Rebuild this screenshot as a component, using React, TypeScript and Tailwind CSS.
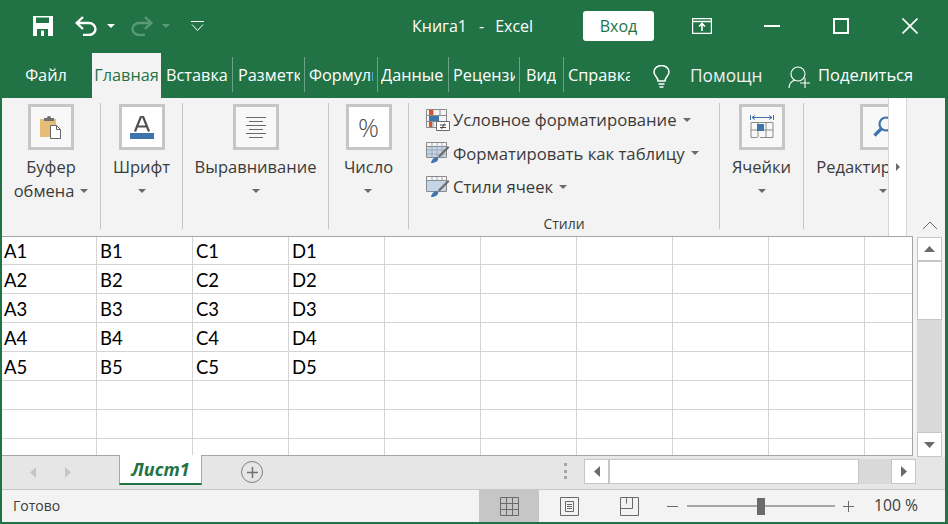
const sans = "font-['Open_Sans','Noto_Sans',sans-serif]";

const tabs = [
  { label: "Вставка", className: "w-[71px] pl-[5px]" },
  { label: "Разметка страницы", className: "w-[72px] pl-[5px] border-l border-[#6aa387]" },
  { label: "Формулы", className: "w-[73px] pl-[4px] border-l border-[#6aa387]" },
  { label: "Данные", className: "w-[71px] pl-[3px] border-l border-[#6aa387]" },
  { label: "Рецензирование", className: "w-[71px] pl-[4px] border-l border-[#6aa387]" },
  { label: "Вид", className: "w-[44px] pl-[6px] border-l border-[#6aa387]" },
  { label: "Справка", className: "w-[71px] pl-[4px] border-l border-[#6aa387]" },
];

function Caret({ className = "" }: { className?: string }) {
  return (
    <svg width="8" height="4" viewBox="0 0 8 4" className={className}>
      <path d="M0 0h8L4 4z" fill="#6a6a6a" />
    </svg>
  );
}

function IconBox({ white, children }: { white?: boolean; children: React.ReactNode }) {
  return (
    <div className={`w-[46px] h-[46px] border-[3px] border-[#c6c6c6] flex items-center justify-center shrink-0 ${white ? "bg-white" : "bg-[#f8f8f8]"}`}>
      {children}
    </div>
  );
}

function Separator() {
  return <div className="w-px h-[126px] mt-[5px] bg-[#c6c6c6] shrink-0" />;
}

function Group({ width, icon, children }: { width: string; icon: React.ReactNode; children: React.ReactNode }) {
  return (
    <div className={`${width} shrink-0 flex flex-col items-center pt-[6px]`}>
      {icon}
      <div className="mt-[5px] flex flex-col items-center text-[16.500px] leading-[24px] text-[#3b3b3b]">{children}</div>
    </div>
  );
}

function Clipboard() {
  return (
    <svg width="22" height="23" viewBox="0 0 22 23">
      <path d="M0 3h16v18H0z" fill="#e6bd78" />
      <path d="M4 2h3a2 2 0 0 1 4 0h3v3H4z" fill="#6f6f6f" />
      <path d="M10.500 9.500h6l4 4v9h-10z" fill="#fff" stroke="#666" />
      <path d="M16.500 9.500v4h4" fill="none" stroke="#666" />
    </svg>
  );
}

function FontIcon() {
  return (
    <svg width="24" height="23" viewBox="0 0 24 23">
      <path d="M5 15.500 11 .5h2l6 15M7.500 10.500h9" fill="none" stroke="#505050" strokeWidth="2.200" />
      <path d="M0 17h24v6H0z" fill="#3f73ad" />
    </svg>
  );
}

function AlignIcon() {
  return (
    <svg width="22" height="22" viewBox="0 0 22 22" stroke="#6a6a6a">
      <path d="M1 1.500h20M4 5.500h14M1 9.500h20M4 13.500h14M1 17.500h20M4 21.500h14" />
    </svg>
  );
}

function CellsIcon() {
  return (
    <svg width="24" height="26" viewBox="0 0 24 26">
      <path d="M.5 1v5M23.500 1v5" stroke="#3f73ad" />
      <path d="M2 3.500h20M5 1.500 2 3.500l3 2M19 1.500l3 2-3 2" fill="none" stroke="#3f73ad" />
      <path d="M1 8.500h22v15H10M1 8.500v15h6M8 8.500v15M16 8.500v15M1 16h22" fill="none" stroke="#8a8a8a" />
      <path d="M7 10h7v7H7z" fill="#3f73ad" />
    </svg>
  );
}

function SearchIcon() {
  return (
    <svg width="22" height="22" viewBox="0 0 22 22">
      <circle cx="14" cy="8" r="6.500" fill="none" stroke="#3f73ad" strokeWidth="2.200" />
      <path d="m9.500 12.500-7 7" stroke="#3f73ad" strokeWidth="3.200" />
    </svg>
  );
}

function BrushGrid({ dense }: { dense?: boolean }) {
  return (
    <svg width="24" height="22" viewBox="0 0 24 22">
      <path d="M.5 .5h20v15H.5z" fill="#f7f7f7" stroke="#8a8a8a" />
      <path d="M1 5h19v10H1z" fill="#c5d5e8" />
      <path d="M.5 4.500h20" stroke="#8a8a8a" />
      {dense && <path d="M1 8h19M1 12h19M6 1v14M11 1v14M16 1v14" stroke="#a0a9b5" />}
      {!dense && <path d="M6 1v3.500M11 1v3.500M16 1v3.500" stroke="#a0a9b5" />}
      <path d="m12 14 10-10 1.500 1.500-10 10z" fill="#6a6a6a" />
      <path d="M5 21c.5-4 4-6.500 7-5.500 1 3-2 5.500-7 5.500z" fill="#3f73ad" />
    </svg>
  );
}

function ConditionalIcon() {
  return (
    <svg width="24" height="22" viewBox="0 0 24 22">
      <path d="M.5 .5h20v18H.5zM.5 6.500h20M.5 12.500h20M7 .5v18M14 .5v6" fill="none" stroke="#8a8a8a" />
      <path d="M3 1h4v5H3z" fill="#d4552c" />
      <path d="M3 7h10v5H3z" fill="#3f73ad" />
      <path d="M3 13h3v5H3z" fill="#d4552c" />
      <path d="M10.500 12.500h13v9h-13z" fill="#fff" stroke="#6a6a6a" />
      <path d="M14 16h6M14 18.500h6M18.500 14.500l-3 5.500" stroke="#333" strokeWidth=".9" />
    </svg>
  );
}

function StyleRow({ icon, label }: { icon: React.ReactNode; label: string }) {
  return (
    <div className="h-[33.500px] flex items-center">
      <div className="w-[27px] shrink-0">{icon}</div>
      <span className="text-[16.700px] text-[#3b3b3b] whitespace-nowrap">{label}</span>
      <Caret className="ml-[6px]" />
    </div>
  );
}

function Ribbon() {
  return (
    <div className="h-[138px] bg-[#f3f3f3] flex shrink-0">
      <Group width="w-[98px]" icon={<IconBox><Clipboard /></IconBox>}>
        <span>Буфер</span>
        <span className="flex items-center">обмена<Caret className="ml-[6px]" /></span>
      </Group>
      <Separator />
      <Group width="w-[81px]" icon={<IconBox white><FontIcon /></IconBox>}>
        <span>Шрифт</span>
        <Caret className="mt-[10px]" />
      </Group>
      <Separator />
      <Group width="w-[145px]" icon={<IconBox><AlignIcon /></IconBox>}>
        <span>Выравнивание</span>
        <Caret className="mt-[10px]" />
      </Group>
      <Separator />
      <Group width="w-[79px]" icon={<IconBox white><span className="text-[26px] leading-none font-light text-[#505050]">%</span></IconBox>}>
        <span>Число</span>
        <Caret className="mt-[10px]" />
      </Group>
      <Separator />
      <div className="w-[310px] shrink-0 flex flex-col pl-[17px] pt-[5px]">
        <StyleRow icon={<ConditionalIcon />} label="Условное форматирование" />
        <StyleRow icon={<BrushGrid dense />} label="Форматировать как таблицу" />
        <StyleRow icon={<BrushGrid />} label="Стили ячеек" />
        <div className="mt-[10px] text-center text-[14px] leading-[20px] text-[#3b3b3b] pr-[17px]">Стили</div>
      </div>
      <Separator />
      <Group width="w-[83px]" icon={<IconBox><CellsIcon /></IconBox>}>
        <span>Ячейки</span>
        <Caret className="mt-[10px]" />
      </Group>
      <Separator />
      <div className="w-[84px] shrink-0 overflow-hidden whitespace-nowrap">
        <div className="w-[134px] ml-[12px] flex flex-col items-center pt-[6px]">
          <IconBox><SearchIcon /></IconBox>
          <div className="mt-[5px] flex flex-col items-center text-[16.500px] leading-[24px] text-[#3b3b3b]">
            <span>Редактирование</span>
            <Caret className="mt-[10px]" />
          </div>
        </div>
      </div>
      <div className="w-[19px] shrink-0 bg-white border-x border-[#d4d4d4] flex items-center justify-center">
        <svg width="4" height="8" viewBox="0 0 4 8"><path d="M0 0v8l4-4z" fill="#6a6a6a" /></svg>
      </div>
      <div className="flex-1 flex items-end justify-center pb-[6px] pl-[8px]">
        <svg width="16" height="9" viewBox="0 0 16 9"><path d="m1 8 7-7 7 7" fill="none" stroke="#6a6a6a" /></svg>
      </div>
    </div>
  );
}

function Sheet() {
  const rows = Array.from({ length: 8 }, (_, i) => i + 1);
  const cols = ["A", "B", "C", "D", "", "", "", "", "", ""];
  return (
    <div className="flex-1 min-w-0 overflow-hidden bg-white border-t border-r border-[#a6a6a6] font-['Lato','Open_Sans',sans-serif] text-[18.500px] text-black">
      {rows.map((r) => (
        <div key={r} className={`flex shrink-0 ${r === 1 ? "h-[28px] leading-[28px]" : "h-[29px] leading-[30px]"}`}>
          {cols.map((c, i) => (
            <div key={i} className={`${i === 0 ? "w-[95px] pl-[2px]" : "w-[96px] pl-[3px]"} h-full shrink-0 border-r border-b border-[#d4d4d4]`}>
              {c && r <= 5 ? `${c}${r}` : ""}
            </div>
          ))}
        </div>
      ))}
    </div>
  );
}

function VerticalScroll() {
  return (
    <div className="w-[32px] shrink-0 bg-[#f3f3f3] flex flex-col pl-[4px] pt-[1px] -mb-[2px] relative z-10">
      <div className="w-[25px] h-[25px] shrink-0 bg-white border border-b-2 border-[#c6c6c6] flex items-center justify-center">
        <svg width="11" height="6" viewBox="0 0 11 6"><path d="M0 6h11L5.500 0z" fill="#6a6a6a" /></svg>
      </div>
      <div className="w-[25px] h-[58px] shrink-0 bg-white border-x border-b border-[#c6c6c6]" />
      <div className="w-[25px] flex-1 bg-[#d9d9d9]" />
      <div className="w-[25px] h-[25px] shrink-0 bg-white border border-[#c6c6c6] flex items-center justify-center">
        <svg width="11" height="6" viewBox="0 0 11 6"><path d="M0 0h11L5.500 6z" fill="#6a6a6a" /></svg>
      </div>
    </div>
  );
}

function SheetBar() {
  return (
    <div className="h-[34px] shrink-0 bg-[#e6e6e6] border-t border-[#a6a6a6] flex items-start">
      <div className="w-[117px] h-full flex items-center shrink-0 pl-[28px] gap-[29px]">
        <svg width="6" height="11" viewBox="0 0 6 11"><path d="M6 0v11L0 5.500z" fill="#c6c6c6" /></svg>
        <svg width="6" height="11" viewBox="0 0 6 11"><path d="M0 0v11l6-5.500z" fill="#c6c6c6" /></svg>
      </div>
      <div className="w-[83px] h-[30px] -mt-px shrink-0 bg-white border-b-2 border-[#217346] border-x border-x-[#a6a6a6] flex items-center justify-center text-[18px] font-bold italic text-[#217346]">
        Лист1
      </div>
      <div className="w-[22px] h-[22px] ml-[39px] mt-[5px] shrink-0 rounded-full border-[1.500px] border-[#808080] flex items-center justify-center">
        <svg width="11" height="11" viewBox="0 0 11 11"><path d="M5.500 0v11M0 5.500h11" stroke="#707070" strokeWidth="1.500" /></svg>
      </div>
      <div className="ml-[301px] mt-[7px] flex flex-col gap-[3.500px] shrink-0">
        <div className="w-[3px] h-[3px] bg-[#a6a6a6]" />
        <div className="w-[3px] h-[3px] bg-[#a6a6a6]" />
        <div className="w-[3px] h-[3px] bg-[#a6a6a6]" />
      </div>
      <div className="ml-[17px] mt-[3px] h-[25px] flex shrink-0 bg-[#d9d9d9]">
        <div className="w-[25px] bg-white border border-[#c6c6c6] flex items-center justify-center">
          <svg width="6" height="11" viewBox="0 0 6 11"><path d="M6 0v11L0 5.500z" fill="#6a6a6a" /></svg>
        </div>
        <div className="w-[250px] bg-white border border-[#c6c6c6]" />
        <div className="w-[32px]" />
        <div className="w-[25px] bg-white border border-[#c6c6c6] flex items-center justify-center">
          <svg width="6" height="11" viewBox="0 0 6 11"><path d="M0 0v11l6-5.500z" fill="#6a6a6a" /></svg>
        </div>
      </div>
    </div>
  );
}

function StatusBar() {
  return (
    <div className="h-[33px] shrink-0 bg-[#f3f3f3] border-t border-[#c6c6c6] flex items-center text-[#3b3b3b]">
      <span className="text-[14px] ml-[11px] w-[466px] shrink-0 pb-[1px]">Готово</span>
      <div className="w-[60px] h-full bg-[#c6c6c6] flex items-center justify-center shrink-0">
        <svg width="19" height="19" viewBox="0 0 19 19" fill="none" stroke="#6a6a6a">
          <path d="M.5 .5h18v18H.5zM.5 6.500h18M.5 12.500h18M6.500 .5v18M12.500 .5v18" />
        </svg>
      </div>
      <div className="w-[60px] flex justify-center shrink-0">
        <svg width="19" height="19" viewBox="0 0 19 19" fill="none" stroke="#6a6a6a">
          <path d="M.5 .5h18v18H.5zM5.500 4.500h8v10h-8zM7 7.500h5M7 9.500h5M7 11.500h5" />
        </svg>
      </div>
      <div className="w-[60px] flex justify-center shrink-0">
        <svg width="19" height="19" viewBox="0 0 19 19" fill="none" stroke="#6a6a6a">
          <path d="M.5 .5h18v18H.5zM.5 11.500h12v-11M6.500 .5v6" />
        </svg>
      </div>
      <div className="ml-[8px] w-[11px] h-px bg-[#6a6a6a] shrink-0" />
      <div className="ml-[9px] w-[148px] h-[2px] bg-[#a6a6a6] shrink-0 flex justify-center items-center">
        <div className="w-[8px] h-[17px] bg-[#6a6a6a] shrink-0" />
      </div>
      <svg width="11" height="11" viewBox="0 0 11 11" className="ml-[8px] shrink-0"><path d="M5.500 0v11M0 5.500h11" stroke="#6a6a6a" /></svg>
      <span className="ml-[20px] text-[15.700px] whitespace-nowrap pb-[1px]">100 %</span>
    </div>
  );
}

export default function App() {
  return (
    <div className={`w-[948px] h-[524px] overflow-hidden bg-[#217346] flex flex-col ${sans}`}>
      <div className="h-[54px] shrink-0 flex items-center text-white pb-[2px]">
        <svg width="20" height="20" viewBox="0 0 20 20" className="ml-[33px] shrink-0">
          <path d="M0 0h20v20H0z" fill="#fff" />
          <path d="M3 1.500h13V7H3z" fill="#217346" />
          <path d="M4 13h11v7H4z" fill="#217346" />
          <path d="M8 14.500h3V20H8z" fill="#fff" />
        </svg>
        <svg width="22" height="20" viewBox="0 0 22 20" fill="none" stroke="#fff" strokeWidth="2.400" className="ml-[22px] shrink-0">
          <path d="M8 1 1.700 7 8 13" />
          <path d="M2 7h12a6.500 6 0 0 1 0 12H8" />
        </svg>
        <Caret className="ml-[10px] [&>path]:fill-white" />
        <svg width="22" height="20" viewBox="0 0 22 20" fill="none" stroke="#5b9a78" strokeWidth="2.400" className="ml-[16px] shrink-0">
          <path d="m14 1 6.300 6L14 13" />
          <path d="M20 7H8a6.500 6 0 0 0 0 12h6" />
        </svg>
        <Caret className="ml-[9px] [&>path]:fill-[#5b9a78]" />
        <svg width="13" height="10" viewBox="0 0 13 10" fill="none" stroke="#fff" className="ml-[21px] shrink-0">
          <path d="M0 .5h13M1 3.500l5.500 6 5.500-6" />
        </svg>
        <div className="ml-[208px] w-[171px] shrink-0 text-[16px] flex">
          <span>Книга1</span>
          <span className="ml-[12px]">-</span>
          <span className="ml-[11px]">Excel</span>
        </div>
        <div className="w-[71px] h-[30px] bg-white rounded-[3px] text-[#217346] text-[16px] flex items-center justify-center shrink-0">Вход</div>
        <svg width="20" height="16" viewBox="0 0 20 16" fill="none" stroke="#fff" className="ml-[38px] shrink-0">
          <path d="M.5 .5h19v15H.5zM.5 3.500h19" strokeWidth="1.400" />
          <path d="M10 13V6M7 8.500l3-3 3 3" strokeWidth="1.600" />
        </svg>
        <div className="ml-[52px] w-[16px] h-[2px] bg-white shrink-0" />
        <div className="ml-[53px] w-[16px] h-[16px] border-2 border-white shrink-0" />
        <svg width="16" height="16" viewBox="0 0 16 16" stroke="#fff" strokeWidth="1.600" className="ml-[53px] shrink-0">
          <path d="m.5 .5 15 15M15.500 .5l-15 15" />
        </svg>
      </div>
      <div className="h-[44px] shrink-0 flex items-start text-white text-[16.300px]">
        <div className="w-[92px] h-[44px] shrink-0 flex items-center justify-center pb-[1px]">Файл</div>
        <div className="w-[69px] h-[45px] -mt-px shrink-0 bg-[#f3f3f3] text-[#217346] flex items-center justify-center whitespace-nowrap">Главная</div>
        {tabs.map((t) => (
          <div key={t.label} className={`${t.className} mt-[3px] h-[35px] pt-[2px] pr-[4px] shrink-0 flex items-center whitespace-nowrap`}>
            <span className="min-w-0 overflow-hidden">{t.label}</span>
          </div>
        ))}
        <svg width="17" height="23" viewBox="0 0 17 23" fill="none" stroke="#fff" strokeWidth="1.500" className="ml-[19px] mt-[11px] shrink-0">
          <path d="M5 16c0-4-4-5-4-9a7.500 6.500 0 0 1 15 0c0 4-4 5-4 9z" />
          <path d="M5.500 19h6M6.500 22h4" />
        </svg>
        <span className="ml-[20px] w-[98px] shrink-0 h-[44px] flex items-center whitespace-nowrap text-[17.300px] text-[#f0f0f0] pb-[1px]">Помощн</span>
        <svg width="22" height="22" viewBox="0 0 22 22" fill="none" stroke="#fff" strokeWidth="1.100" className="mt-[12px] shrink-0">
          <circle cx="10" cy="8" r="7" />
          <path d="M1 22c0-4 3-7 6-8M12 17h10M17 12v10" />
        </svg>
        <span className="ml-[8px] h-[44px] flex items-center whitespace-nowrap text-[16.500px] pb-[1px]">Поделиться</span>
      </div>
      <div className="flex-1 min-h-0 ml-[2px] mr-[3px] mb-[2px] bg-[#f3f3f3] flex flex-col text-[#3b3b3b]">
        <Ribbon />
        <div className="flex-1 min-h-0 flex">
          <Sheet />
          <VerticalScroll />
        </div>
        <SheetBar />
        <StatusBar />
      </div>
    </div>
  );
}
